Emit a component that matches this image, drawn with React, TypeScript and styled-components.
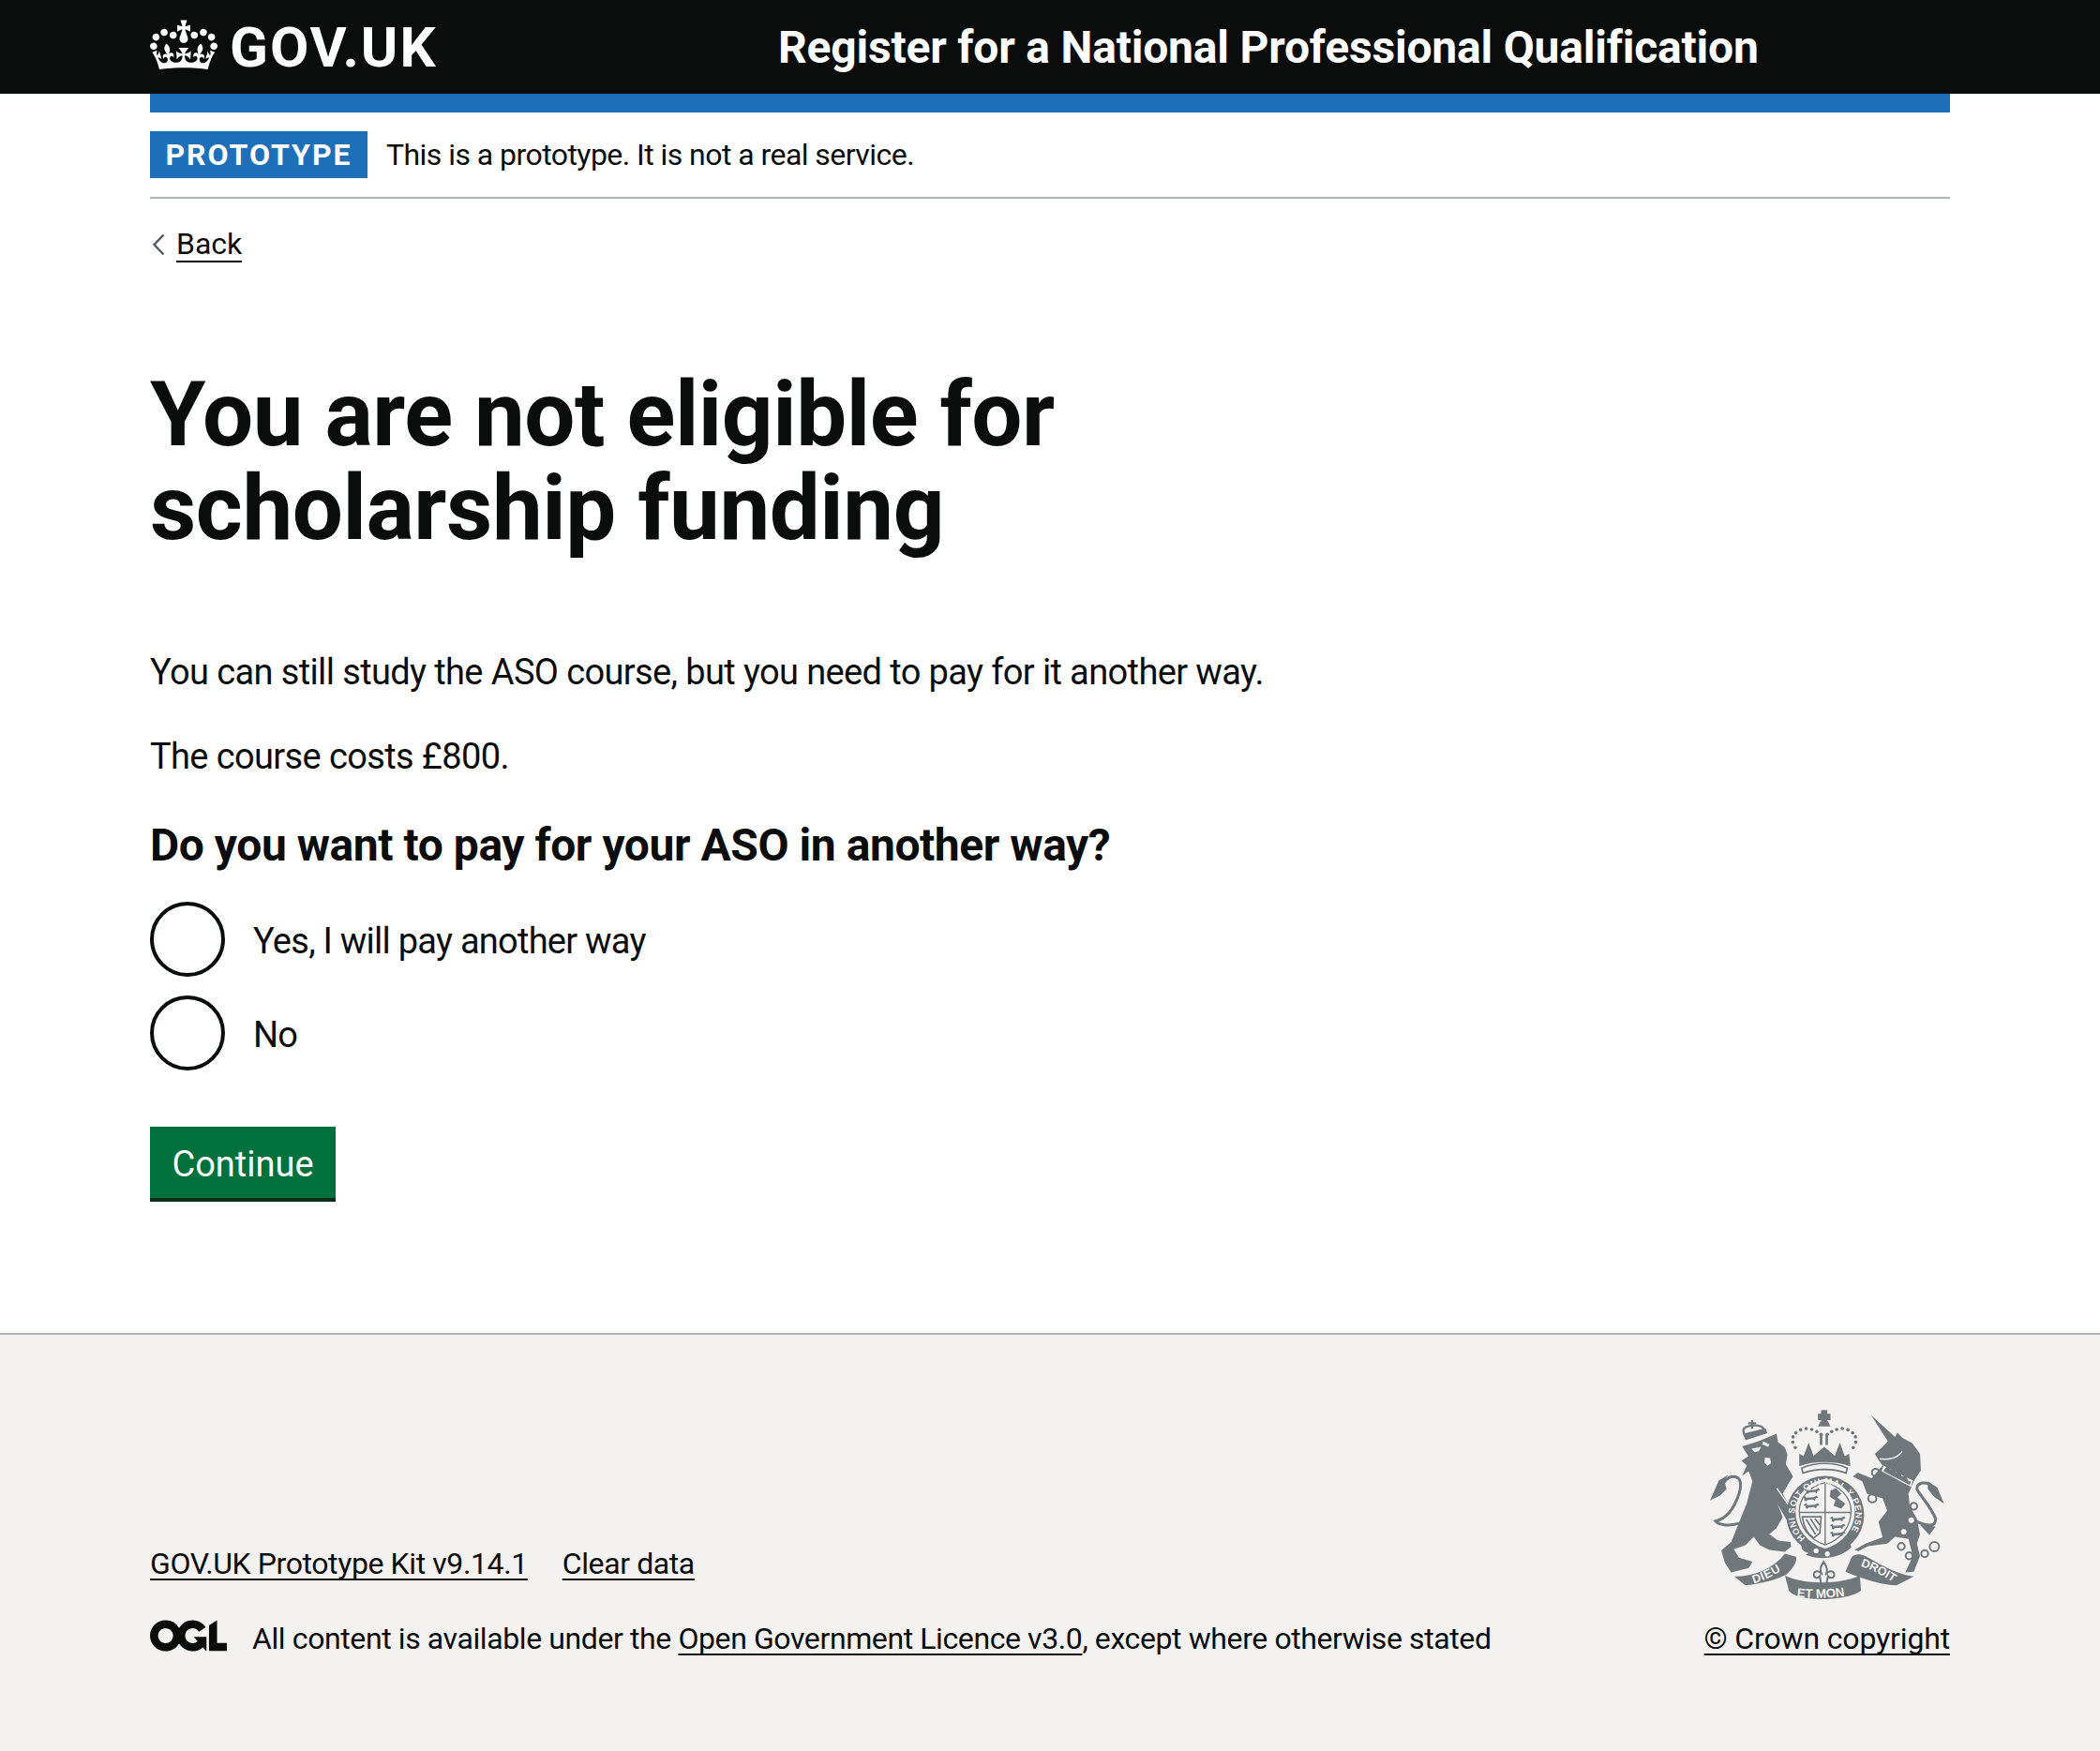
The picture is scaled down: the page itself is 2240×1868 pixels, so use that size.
import { styled, createGlobalStyle } from 'styled-components';

const Global = createGlobalStyle`
    html, body {
        margin: 0;
        padding: 0;
        background: #fff;
    }
    body {
        font-family: Roboto, "Liberation Sans", sans-serif;
        color: #0b0c0c;
    }
`;

const S = {
    Header: styled.header`
        background: #0b0c0c;
        height: 100px;
    `,
    HeaderInner: styled.div`
        width: 1920px;
        margin: 0 auto;
        height: 100%;
        display: flex;
        align-items: center;
    `,
    Logo: styled.a`
        width: 670px;
        display: flex;
        align-items: center;
        gap: 13px;
        color: #fff;
        font-size: 60px;
        font-weight: 700;
        letter-spacing: 2px;
    `,
    CrownIcon: styled.svg`
        margin-top: -5px;
        color: #fff;
    `,
    ServiceName: styled.a`
        color: #fff;
        font-size: 48px;
        font-weight: 700;
        letter-spacing: -0.2px;
    `,
    Container: styled.div`
        width: 1920px;
        margin: 0 auto;
    `,
    BlueBar: styled.div`
        height: 20px;
        background: #1d70b8;
    `,
    Phase: styled.div`
        display: flex;
        align-items: center;
        gap: 20px;
        padding: 20px 0;
        border-bottom: 2px solid #b1b4b6;
        font-size: 32px;
        letter-spacing: -0.55px;
    `,
    Tag: styled.strong`
        background: #1d70b8;
        color: #fff;
        height: 50px;
        width: 232px;
        display: flex;
        align-items: center;
        justify-content: center;
        font-size: 32px;
        letter-spacing: 2px;
    `,
    Back: styled.a`
        display: flex;
        width: fit-content;
        align-items: center;
        gap: 12px;
        margin-top: 30px;
        font-size: 32px;
        line-height: 36px;
        span {
            border-bottom: 2px solid #0b0c0c;
        }
    `,
    Title: styled.h1`
        margin: 112px 0 0;
        font-size: 96px;
        line-height: 100px;
        font-weight: 700;
        letter-spacing: -0.45px;
    `,
    Para: styled.p<{ $first?: boolean }>`
        margin: ${(p) => (p.$first ? '99px' : '38px')} 0 0;
        font-size: 38px;
        line-height: 52px;
        letter-spacing: -0.62px;
    `,
    Question: styled.h2`
        margin: 44px 0 0;
        font-size: 48px;
        line-height: 50px;
        font-weight: 700;
        letter-spacing: -0.45px;
    `,
    Radios: styled.div`
        margin-top: 35px;
        display: flex;
        flex-direction: column;
        gap: 20px;
    `,
    Radio: styled.label`
        display: flex;
        align-items: center;
        gap: 30px;
        font-size: 38px;
        line-height: 50px;
        letter-spacing: -0.75px;
    `,
    RadioText: styled.span`
        padding-top: 4px;
    `,
    Circle: styled.span`
        width: 80px;
        height: 80px;
        box-sizing: border-box;
        border: 4px solid #0b0c0c;
        border-radius: 50%;
    `,
    Button: styled.button`
        display: block;
        margin: 60px 0 0;
        padding: 3px 0 0;
        width: 198px;
        height: 76px;
        border: 0;
        box-shadow: 0 4px 0 #002d18;
        background: #00703c;
        color: #fff;
        font-family: inherit;
        font-size: 38px;
    `,
    Footer: styled.footer`
        margin-top: 144px;
        height: 446px;
        box-sizing: border-box;
        background: #f3f2f1;
        border-top: 2px solid #b1b4b6;
    `,
    FooterInner: styled.div`
        width: 1920px;
        height: 100%;
        margin: 0 auto;
        padding-bottom: 100px;
        box-sizing: border-box;
        display: flex;
        justify-content: space-between;
        align-items: flex-end;
    `,
    Meta: styled.div`
        display: flex;
        flex-direction: column;
        gap: 40px;
        font-size: 32px;
        letter-spacing: -0.4px;
    `,
    MetaLinks: styled.div`
        display: flex;
        gap: 37px;
    `,
    FootLink: styled.a`
        color: #0b0c0c;
        line-height: 40px;
        text-decoration: underline;
        text-decoration-thickness: 2px;
        text-underline-offset: 5px;
        text-decoration-skip-ink: none;
    `,
    Licence: styled.div`
        display: flex;
        align-items: flex-start;
        gap: 27px;
        line-height: 40px;
    `,
    Copyright: styled.div`
        display: flex;
        flex-direction: column;
        align-items: flex-end;
        gap: 18px;
        font-size: 32px;
        letter-spacing: -0.15px;
    `,
    CrestIcon: styled.svg`
        margin-right: 2px;
    `,
};

const Crown = () => (
    <S.CrownIcon viewBox="0 0 132 97" width="72" height="54" aria-hidden="true">
        <path
            fill="currentColor"
            fillRule="evenodd"
            d="M25 30.2c3.5 1.5 7.7-.2 9.1-3.7 1.5-3.6-.2-7.8-3.9-9.2-3.6-1.4-7.6.3-9.1 3.9-1.4 3.5.3 7.5 3.9 9zM9 39.5c3.6 1.5 7.8-.2 9.2-3.7 1.5-3.6-.2-7.8-3.9-9.1-3.6-1.5-7.6.2-9.1 3.8-1.4 3.5.3 7.5 3.8 9zM4.4 57.2c3.5 1.5 7.7-.2 9.1-3.8 1.5-3.6-.2-7.7-3.9-9.1-3.5-1.5-7.6.3-9.1 3.8-1.4 3.5.3 7.6 3.9 9.1zm38.3-21.4c3.5 1.5 7.7-.2 9.1-3.8 1.5-3.6-.2-7.7-3.9-9.1-3.6-1.5-7.6.3-9.1 3.8-1.3 3.6.4 7.7 3.9 9.1zm64.4-5.6c-3.6 1.5-7.8-.2-9.1-3.7-1.5-3.6.2-7.8 3.8-9.2 3.6-1.4 7.7.3 9.2 3.9 1.3 3.5-.4 7.5-3.9 9zm15.9 9.3c-3.6 1.5-7.7-.2-9.1-3.7-1.5-3.6.2-7.8 3.7-9.1 3.6-1.5 7.7.2 9.2 3.8 1.5 3.5-.3 7.5-3.8 9zm4.7 17.7c-3.6 1.5-7.8-.2-9.2-3.8-1.5-3.6.2-7.7 3.9-9.1 3.6-1.5 7.7.3 9.2 3.8 1.3 3.5-.4 7.6-3.9 9.1zM89.3 35.8c-3.6 1.5-7.8-.2-9.2-3.8-1.4-3.6.2-7.7 3.9-9.1 3.6-1.5 7.7.3 9.2 3.8 1.4 3.6-.3 7.7-3.9 9.1zM69.7 17.7l8.9 4.7V9.3l-8.9 2.8c-.2-.3-.5-.6-.9-.9L72.4 0H59.6l3.5 11.2c-.3.3-.6.5-.9.9l-8.8-2.8v13.1l8.8-4.7c.3.3.6.7.9.9l-5 15.4v.1c-.2.8-.4 1.6-.4 2.4 0 4.1 3.1 7.5 7 8.1h.2c.3 0 .7.1 1 .1.4 0 .7 0 1-.1h.2c4-.6 7.1-4.1 7.1-8.1 0-.8-.1-1.7-.4-2.4V34l-5.1-15.4c.4-.2.7-.6 1-.9zM66 92.8c16.9 0 32.8 1.1 47.1 3.2 4-16.9 8.9-26.7 14-33.5l-9.6-3.4c1 4.9 1.1 7.2 0 10.2-1.5-1.4-3-4.3-4.2-8.7L108.6 76c2.8-2 5-3.2 7.5-3.3-4.4 9.4-10 11.9-13.6 11.2-4.3-.8-6.3-4.6-5.6-7.9 1-4.7 5.7-5.9 8-.5 4.3-8.7-3-11.4-7.6-8.8 7.1-7.2 7.9-13.5 2.1-21.1-8 6.1-8.1 12.3-4.5 20.8-4.7-5.4-12.1-2.5-9.5 6.2 3.4-5.2 7.9-2 7.2 3.1-.6 4.3-6.4 7.8-13.5 7.2-10.3-.9-10.9-8-11.2-13.8 2.5-.5 7.1 1.8 11 7.3L80.2 60c-4.1 4.4-8 5.3-12.3 5.4 1.4-4.4 8-11.6 8-11.6H55.5s6.4 7.2 7.9 11.6c-4.2-.1-8-1-12.3-5.4l1.4 16.4c3.9-5.5 8.5-7.7 10.9-7.3-.3 5.8-.9 12.8-11.1 13.8-7.2.6-12.9-2.9-13.5-7.2-.7-5 3.8-8.3 7.1-3.1 2.7-8.7-4.6-11.6-9.4-6.2 3.7-8.5 3.6-14.7-4.6-20.8-5.8 7.6-5 13.9 2.2 21.1-4.7-2.6-11.9.1-7.7 8.8 2.3-5.5 7.1-4.2 8.1.5.7 3.3-1.3 7.1-5.7 7.9-3.5.7-9-1.8-13.5-11.2 2.5.1 4.7 1.3 7.5 3.3l-4.7-15.4c-1.2 4.4-2.7 7.2-4.3 8.7-1.1-3-.9-5.3 0-10.2l-9.5 3.4c5 6.9 9.9 16.7 14 33.5 14.8-2.1 30.8-3.2 47.7-3.2z"
        />
    </S.CrownIcon>
);

const Chevron = () => (
    <svg viewBox="0 0 16 24" width="16" height="24" aria-hidden="true">
        <path d="M14.5 1.5 4.5 12l10 10.5" fill="none" stroke="#505a5f" strokeWidth="2.4" />
    </svg>
);

const Ogl = () => (
    <svg viewBox="0 0 483.2 195.7" width="82" height="34" aria-hidden="true">
        <path
            fill="#0b0c0c"
            d="M421.5 142.8V.1l-50.7 32.3v161.1h112.4v-50.7zm-122.3-9.6A47.12 47.12 0 0 1 221 97.8c0-26 21.1-47.1 47.1-47.1 16.7 0 31.4 8.7 39.7 21.8l42.7-27.2A97.63 97.63 0 0 0 268.1 0c-36.5 0-68.3 20.1-85.1 49.7A98 98 0 0 0 97.8 0C43.9 0 0 43.9 0 97.8s43.9 97.8 97.8 97.8c36.5 0 68.3-20.1 85.1-49.7a97.76 97.76 0 0 0 149.6 25.4l19.4 22.2h3v-87.8h-80l24.3 27.5zM97.8 145c-26 0-47.1-21.1-47.1-47.1s21.1-47.1 47.1-47.1 47.2 21 47.2 47S123.8 145 97.8 145"
        />
    </svg>
);

const INK = '#6f777b';
const PAPER = '#f3f2f1';

// dots along the left arch of the big crown, the right arch is the mirror
const ARCH = [
    [345, 192],
    [337, 175],
    [338, 158],
    [347, 145],
    [362, 135],
    [380, 131],
    [398, 134],
    [414, 141],
    [428, 150],
];

// one small leopard of the shield, drawn at its own spot
const Leopard = ({ x, y }: { x: number; y: number }) => (
    <path
        fill={INK}
        transform={`translate(${x} ${y})`}
        d="M0 2 L8 -3 L12 3 L36 1 L46 -4 L50 3 L42 6 L40 13 L34 9 L16 10 L12 15 L6 11 L7 6 Z"
    />
);

const Crest = () => (
    <S.CrestIcon viewBox="60 65 775 625" width="258" height="208" aria-label="Royal coat of arms" fontFamily="Liberation Sans, sans-serif" fontWeight="700">
        <defs>
            <path id="garter" d="M377 482 A98 98 0 1 1 498 487" />
            <path id="mottoLeft" d="M212 628 Q270 610 322 572" />
            <path id="mottoMid" d="M350 670 Q430 680 526 664" />
            <path id="mottoRight" d="M554 572 Q610 590 664 628" />
        </defs>

        {/* lion */}
        <path
            fill={INK}
            d="M175 188 L228 172 L285 148 L290 175 L312 192 L320 215 L315 245 L338 285 L325 305 L305 340 L325 375 L345 415 L335 440 L315 420 L288 372 L305 415 L285 450 L262 470 L290 490 L330 495 L332 510 L312 526 L262 520 L232 505 L212 478 L185 505 L148 518 L165 545 L208 558 L196 578 L140 592 L120 562 L108 522 L140 495 L162 440 L190 370 L208 300 L196 268 L175 282 L190 250 L173 235 L195 220 Z"
        />
        <path
            fill="none"
            stroke={INK}
            strokeWidth="9"
            d="M165 435 C130 445 100 440 90 428 C125 420 150 385 165 340 C175 305 170 285 145 285 C125 285 110 310 100 330"
        />
        <path fill={INK} d="M130 280 L100 298 L72 362 L105 345 L125 325 L118 300 Z" />
        <path fill={PAPER} d="M205 196 L236 190 L228 204 L214 206 Z M242 172 L263 182 L258 190 L240 182 Z M248 224 L264 226 L268 242 L256 250 L246 240 Z" />
        <path fill="none" stroke={PAPER} strokeWidth="4" d="M286 322 L340 400" />
        <g fill="none" stroke={INK} strokeWidth="7">
            <path d="M186 158 C172 135 178 126 205 122 C235 118 252 128 240 148" />
            <path d="M207 104 V132 M194 114 H220" />
        </g>
        <path fill={INK} d="M178 148 L250 130 L256 146 L186 170 Z" />
        <path fill={PAPER} d="M180 170 L258 146 L258 152 L182 176 Z" />

        {/* unicorn */}
        <path
            fill={INK}
            d="M588 88 L665 158 L672 145 L690 162 L720 178 L745 212 L748 265 L725 300 L708 340 L712 380 L735 420 L745 470 L735 500 L745 540 L725 590 L698 592 L722 540 L708 485 L665 478 L640 500 L578 508 L548 524 L535 520 L570 500 L625 480 L612 430 L640 395 L625 355 L575 340 L560 300 L530 285 L545 272 L590 290 L625 250 L612 232 L600 212 L625 190 L642 172 Z"
        />
        <path
            fill="none"
            stroke={INK}
            strokeWidth="9"
            d="M735 430 C785 450 795 440 795 420 C780 380 740 340 735 325 C735 305 765 295 785 320"
        />
        <path fill={INK} d="M770 300 L800 320 L822 372 L790 350 L770 325 Z M745 440 L795 445 L775 472 Z" />
        <path fill={PAPER} d="M628 250 L722 298 L716 318 L622 268 Z" />
        <path fill={INK} d="M634 258 L644 248 L650 262 L662 256 L668 272 L682 268 L686 284 L700 282 L708 300 L716 300 L712 312 L628 268 Z" />
        <path fill="none" stroke={PAPER} strokeWidth="4" d="M616 228 C640 232 672 228 688 204" />
        <g fill={PAPER}>
            <circle cx="693" cy="462" r="9" />
            <circle cx="717" cy="425" r="9" />
        </g>
        <g fill="none" stroke={INK} strokeWidth="6">
            <circle cx="603" cy="272" r="12" />
            <circle cx="592" cy="355" r="13" />
            <circle cx="725" cy="380" r="11" />
            <circle cx="685" cy="509" r="11" />
            <circle cx="710" cy="539" r="11" />
            <circle cx="760" cy="532" r="11" />
            <circle cx="791" cy="510" r="15" />
        </g>

        {/* crown above the shield */}
        <g fill={INK}>
            <path d="M428 72 H448 V84 H458 V104 H448 V116 H428 V104 H418 V84 H428 Z" />
            <path d="M418 124 H458 L450 108 H426 Z" />
            <path d="M424 150 H432 V184 H424 Z M442 150 H450 V184 H442 Z" />
            <path d="M358 212 L372 220 L388 176 L404 218 L438 190 L472 218 L488 176 L504 220 L518 212 L522 252 C470 234 405 234 358 252 Z" />
            {ARCH.map(([x, y]) => (
                <g key={x}>
                    <circle cx={x} cy={y} r="5.5" />
                    <circle cx={876 - x} cy={y} r="5.5" />
                </g>
            ))}
        </g>
        <path fill="none" stroke={INK} strokeWidth="5" d="M366 258 C410 238 470 238 512 258 L508 274 C470 258 410 258 370 274 Z" />

        {/* garter and shield */}
        <circle cx="441" cy="408" r="125" fill={INK} />
        <path
            fill={PAPER}
            stroke={PAPER}
            strokeWidth="8"
            d="M350 396 C350 345 390 306 441 296 C492 306 532 345 532 396 C532 450 495 496 441 512 C387 496 350 450 350 396 Z"
        />
        <path
            fill="none"
            stroke={INK}
            strokeWidth="4"
            d="M358 396 C358 350 395 314 441 304 C487 314 524 350 524 396 C524 446 490 488 441 504 C392 488 358 446 358 396 Z M358 400 H524 M441 304 V504"
        />
        <Leopard x={374} y={326} />
        <Leopard x={368} y={350} />
        <Leopard x={372} y={374} />
        <Leopard x={456} y={416} />
        <Leopard x={456} y={440} />
        <Leopard x={456} y={464} />
        <path fill={INK} d="M458 330 L476 322 L492 340 L480 352 L506 372 L492 388 L468 378 L474 362 L456 350 Z" />
        <path
            fill="none"
            stroke={INK}
            strokeWidth="5"
            d="M368 414 H428 L424 466 L404 482 C384 470 372 446 368 414 Z M380 422 L410 470 M394 420 L418 458 M408 420 L424 440"
        />
        <text fill={PAPER} fontSize="28" letterSpacing="2">
            <textPath href="#garter">HONI SOIT QUI MAL Y PENSE</textPath>
        </text>
        <path fill={INK} d="M362 492 C400 535 480 535 520 492 L525 512 C480 555 400 555 368 528 Z" />
        <g fill={PAPER}>
            <circle cx="412" cy="523" r="8" />
            <circle cx="448" cy="533" r="8" />
            <path d="M360 508 C368 522 378 528 388 530 L376 538 C368 534 362 526 360 508 Z" />
        </g>

        {/* fleur-de-lis and motto ribbon */}
        <path
            fill={PAPER}
            stroke={INK}
            strokeWidth="6"
            d="M436 558 C448 575 450 590 442 600 C452 585 470 585 470 600 C470 612 455 612 450 604 L445 630 H428 L424 604 C418 612 405 612 405 600 C405 585 422 585 432 600 C424 590 424 575 436 558 Z"
        />
        <path fill={INK} d="M150 605 C215 605 275 580 312 532 L348 542 C352 560 335 582 318 598 C280 618 230 628 185 634 Z" />
        <path fill={INK} d="M312 602 C370 632 490 632 552 602 L556 650 C520 682 360 692 325 652 Z" />
        <path fill={INK} d="M525 545 C535 532 552 532 570 540 C615 565 670 600 725 605 L670 634 C630 632 570 618 506 590 Z" />
        <g fill={PAPER}>
            <text fontSize="38" letterSpacing="2">
                <textPath href="#mottoLeft">DIEU</textPath>
            </text>
            <text fontSize="40">
                <textPath href="#mottoMid">ET MON</textPath>
            </text>
            <text fontSize="38">
                <textPath href="#mottoRight">DROIT</textPath>
            </text>
        </g>
    </S.CrestIcon>
);

export default function App() {
    return (
        <>
            <Global />
            <S.Header>
                <S.HeaderInner>
                    <S.Logo>
                        <Crown />
                        GOV.UK
                    </S.Logo>
                    <S.ServiceName>Register for a National Professional Qualification</S.ServiceName>
                </S.HeaderInner>
            </S.Header>
            <S.Container>
                <S.BlueBar />
                <S.Phase>
                    <S.Tag>PROTOTYPE</S.Tag>
                    This is a prototype. It is not a real service.
                </S.Phase>
                <S.Back>
                    <Chevron />
                    <span>Back</span>
                </S.Back>
                <S.Title>
                    You are not eligible for
                    <br />
                    scholarship funding
                </S.Title>
                <S.Para $first>You can still study the ASO course, but you need to pay for it another way.</S.Para>
                <S.Para>The course costs £800.</S.Para>
                <S.Question>Do you want to pay for your ASO in another way?</S.Question>
                <S.Radios>
                    <S.Radio>
                        <S.Circle />
                        <S.RadioText>Yes, I will pay another way</S.RadioText>
                    </S.Radio>
                    <S.Radio>
                        <S.Circle />
                        <S.RadioText>No</S.RadioText>
                    </S.Radio>
                </S.Radios>
                <S.Button type="button">Continue</S.Button>
            </S.Container>
            <S.Footer>
                <S.FooterInner>
                    <S.Meta>
                        <S.MetaLinks>
                            <S.FootLink>GOV.UK Prototype Kit v9.14.1</S.FootLink>
                            <S.FootLink>Clear data</S.FootLink>
                        </S.MetaLinks>
                        <S.Licence>
                            <Ogl />
                            <span>
                                All content is available under the <S.FootLink>Open Government Licence v3.0</S.FootLink>, except where otherwise stated
                            </span>
                        </S.Licence>
                    </S.Meta>
                    <S.Copyright>
                        <Crest />
                        <S.FootLink>© Crown copyright</S.FootLink>
                    </S.Copyright>
                </S.FooterInner>
            </S.Footer>
        </>
    );
}
